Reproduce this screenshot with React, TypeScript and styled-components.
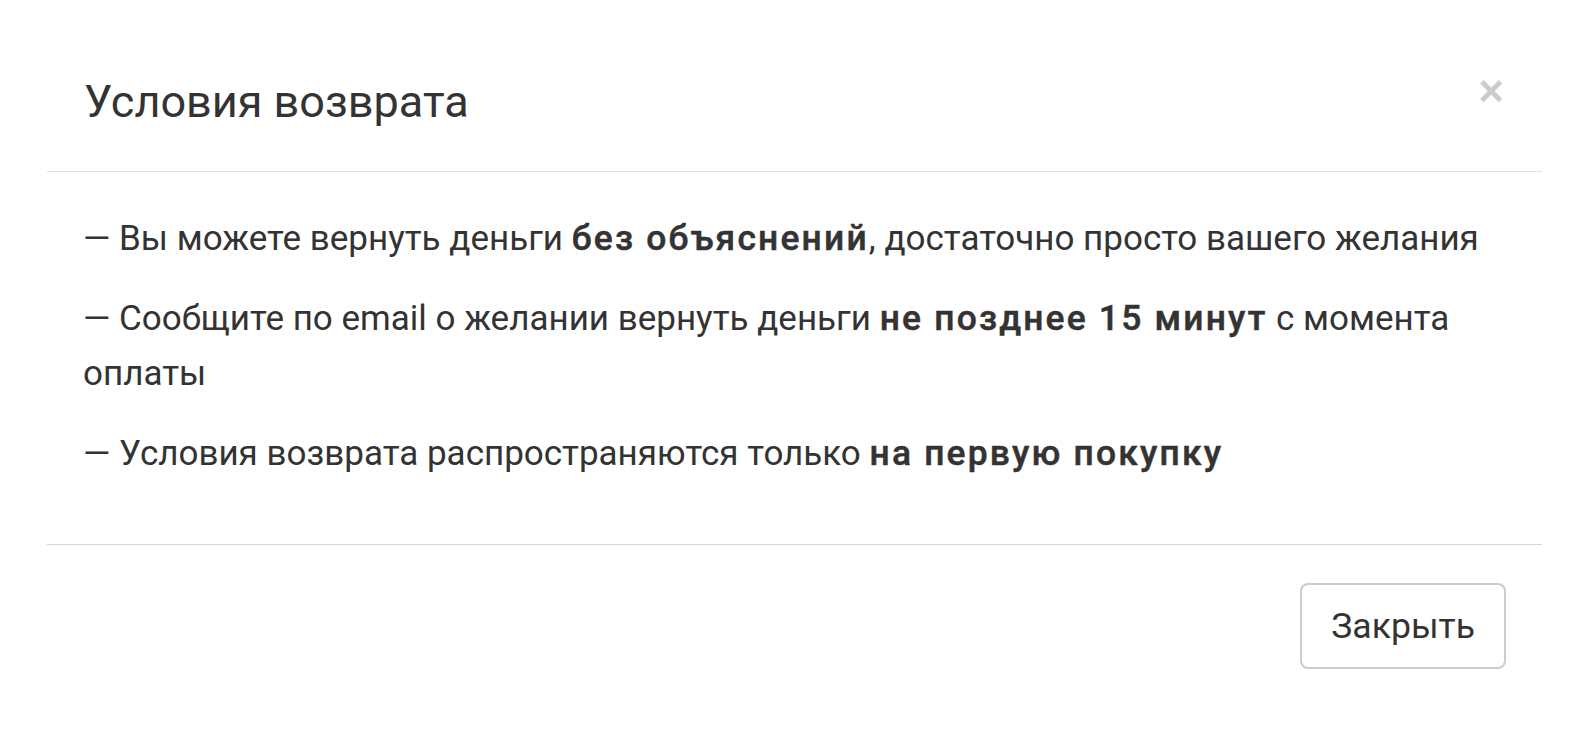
import React from "react";
import styled, { createGlobalStyle } from "styled-components";

const Global = createGlobalStyle`
  html, body { margin: 0; padding: 0; background: #fff; }
  body { font-family: Roboto, "Liberation Sans", sans-serif; color: #333; }
`;

const Modal = styled.div`
  margin-left: 47px;
  width: 1495px;
  background: #fff;
`;

const Header = styled.div`
  position: relative;
  height: 172px;
  box-sizing: border-box;
  padding: 74px 37px 0;
  border-bottom: 1px solid #e0e0e0;
`;

const Title = styled.h4`
  margin: 0;
  font-size: 45px;
  font-weight: 400;
  line-height: 56px;
  color: #333;
`;

const Close = styled.button`
  position: absolute;
  top: 69px;
  right: 38px;
  border: 0;
  background: none;
  padding: 0;
  font-family: "Liberation Sans", Arial, sans-serif;
  font-size: 44px;
  font-weight: 700;
  line-height: 1;
  color: #000;
  opacity: 0.2;
  cursor: pointer;
`;

const Body = styled.div`
  padding: 39px 36px 39px;
  border-bottom: 1px solid #d6d6d6;
`;

const Para = styled.p`
  margin: 0 0 24px;
  font-size: 35px;
  line-height: 55.6px;
  color: #333;
`;

const Strong = styled.b`
  font-size: 35.4px;
  font-weight: 500;
  letter-spacing: 2.2px;
  -webkit-text-stroke: 0.5px #333;
`;

const Footer = styled.div`
  display: flex;
  justify-content: flex-end;
  padding: 38px 36px 40px;
`;

const Button = styled.button`
  font-family: Roboto, "Liberation Sans", sans-serif;
  font-size: 35.6px;
  line-height: 54px;
  color: #333;
  background: #fff;
  border: 2px solid #ccc;
  border-radius: 8px;
  padding: 14px 29px;
  cursor: pointer;
`;

export default function App() {
  return (
    <>
      <Global />
      <Modal>
        <Header>
          <Title>Условия возврата</Title>
          <Close aria-label="Закрыть">×</Close>
        </Header>
        <Body>
          <Para>
            — Вы можете вернуть деньги <Strong>без объяснений</Strong>, достаточно просто вашего желания
          </Para>
          <Para>
            — Сообщите по email о желании вернуть деньги <Strong>не позднее 15 минут</Strong> с момента оплаты
          </Para>
          <Para>
            — Условия возврата распространяются только <Strong>на первую покупку</Strong>
          </Para>
        </Body>
        <Footer>
          <Button>Закрыть</Button>
        </Footer>
      </Modal>
    </>
  );
}
